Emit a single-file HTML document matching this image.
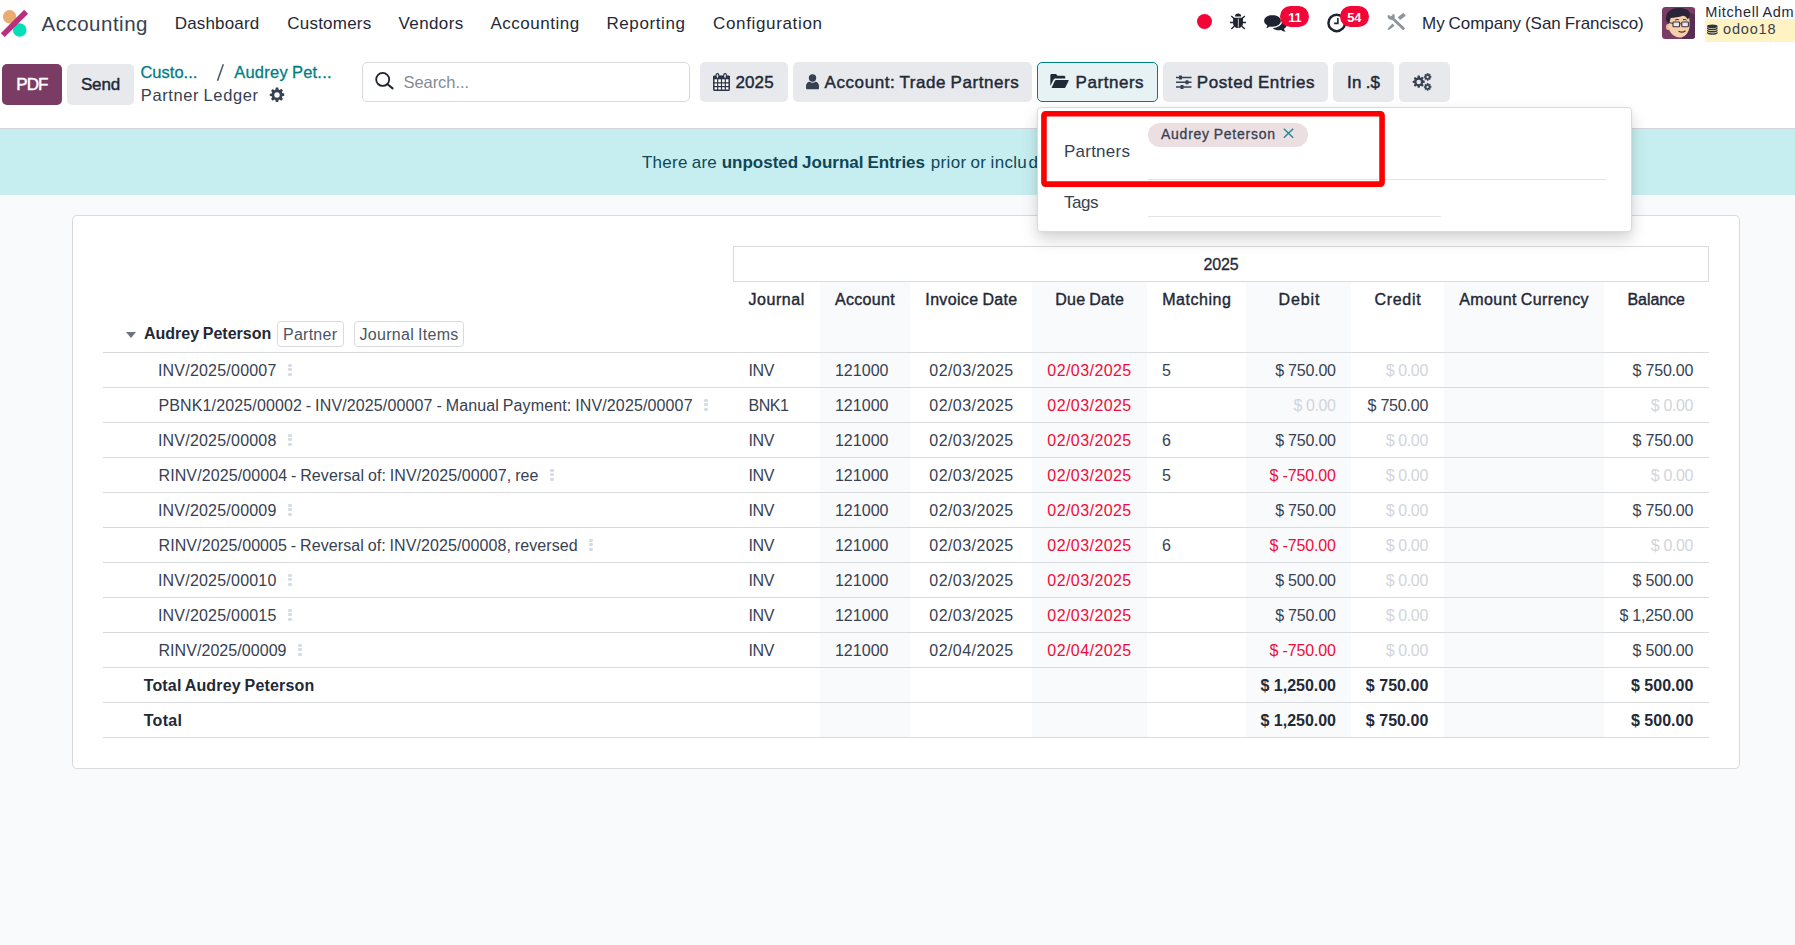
<!DOCTYPE html>
<html><head><meta charset="utf-8"><title>Partner Ledger</title>
<style>
html,body{margin:0;padding:0}
body{width:1795px;height:945px;overflow:hidden;position:relative;background:#f9fafb;font-family:"Liberation Sans",sans-serif}
.b{position:absolute;display:block}
.t{position:absolute;white-space:pre;line-height:1;display:block}
</style></head><body>
<div class="b" style="left:0px;top:0px;width:1795px;height:128px;background:#ffffff;"></div>
<div class="b" style="left:0px;top:128px;width:1795px;height:67px;background:#c6eef0;"></div>
<div class="b" style="left:0px;top:128px;width:1795px;height:1px;background:#d3d5da;"></div>
<div class="b" style="left:72px;top:215px;width:1668px;height:554px;background:#ffffff;border:1px solid #d8dadd;box-sizing:border-box;border-radius:5px;"></div>
<div class="b" style="left:820px;top:282px;width:90px;height:455px;background:#f9fafb;"></div>
<div class="b" style="left:1032px;top:282px;width:115px;height:455px;background:#f9fafb;"></div>
<div class="b" style="left:1246px;top:282px;width:105px;height:455px;background:#f9fafb;"></div>
<div class="b" style="left:1444px;top:282px;width:160px;height:455px;background:#f9fafb;"></div>
<div class="b" style="left:733px;top:246px;width:976px;height:36px;background:#ffffff;border:1px solid #d8dadd;box-sizing:border-box;"></div>
<div class="b" style="left:103px;top:352px;width:1606px;height:1px;background:#d8dadd;"></div>
<div class="b" style="left:103px;top:387px;width:1606px;height:1px;background:#d8dadd;"></div>
<div class="b" style="left:103px;top:422px;width:1606px;height:1px;background:#d8dadd;"></div>
<div class="b" style="left:103px;top:457px;width:1606px;height:1px;background:#d8dadd;"></div>
<div class="b" style="left:103px;top:492px;width:1606px;height:1px;background:#d8dadd;"></div>
<div class="b" style="left:103px;top:527px;width:1606px;height:1px;background:#d8dadd;"></div>
<div class="b" style="left:103px;top:562px;width:1606px;height:1px;background:#d8dadd;"></div>
<div class="b" style="left:103px;top:597px;width:1606px;height:1px;background:#d8dadd;"></div>
<div class="b" style="left:103px;top:632px;width:1606px;height:1px;background:#d8dadd;"></div>
<div class="b" style="left:103px;top:667px;width:1606px;height:1px;background:#d8dadd;"></div>
<div class="b" style="left:103px;top:702px;width:1606px;height:1px;background:#d8dadd;"></div>
<div class="b" style="left:103px;top:737px;width:1606px;height:1px;background:#d8dadd;"></div>
<svg class="b" style="left:0px;top:4px;" width="40" height="40" viewBox="0 4 40 40"><circle cx="9.6" cy="16.7" r="6.7" fill="#e9ac72"/><circle cx="19.7" cy="30" r="6.8" fill="#04dfba"/><line x1="2.8" y1="35.1" x2="26.1" y2="11.8" stroke="#b9307e" stroke-width="5.5" stroke-linecap="butt"/></svg>
<span class="t" style="left:41.50px;top:14.00px;font-size:20.5px;color:#374151;letter-spacing:0.507px;">Accounting</span>
<span class="t" style="left:174.70px;top:15.00px;font-size:17px;color:#1f2937;letter-spacing:0.166px;">Dashboard</span>
<span class="t" style="left:287.30px;top:15.00px;font-size:17px;color:#1f2937;letter-spacing:0.214px;">Customers</span>
<span class="t" style="left:398.50px;top:15.00px;font-size:17px;color:#1f2937;letter-spacing:0.385px;">Vendors</span>
<span class="t" style="left:490.40px;top:15.00px;font-size:17px;color:#1f2937;letter-spacing:0.531px;">Accounting</span>
<span class="t" style="left:606.40px;top:15.00px;font-size:17px;color:#1f2937;letter-spacing:0.610px;">Reporting</span>
<span class="t" style="left:713.00px;top:15.00px;font-size:17px;color:#1f2937;letter-spacing:0.656px;">Configuration</span>
<div class="b" style="left:1197.4px;top:13.9px;width:15.0px;height:14.999999999999998px;background:#f20537;border-radius:8px;"></div>
<svg class="b" style="left:1226px;top:10px;" width="24" height="24" viewBox="1226 10 24 24"><g fill="#1f2433"><path d="M1235 16.400a3.100 2.900 0 0 1 6.200 0z"/><path d="M1233.100 17.800h9.900v5.400c0 2.700-2.200 4.750-4.950 4.750s-4.950-2.050-4.950-4.750z"/></g><g stroke="#1f2433" stroke-width="1.350" fill="none"><path d="M1231.300 16 1234 18.500M1230 22.500h3.500M1231.300 29 1234.200 26.200M1244.800 16 1242.100 18.500M1246 22.500h-3.500M1244.800 29 1241.900 26.200"/></g><path d="M1238.350 18.600v9" stroke="#e8d7c0" stroke-width="0.9"/></svg>
<svg class="b" style="left:1260px;top:10px;" width="30" height="26" viewBox="1260 10 30 26"><g fill="#1f2433"><path d="M1278.800 18.700c-4.400 0-8 2.550-8 5.750 0 3.150 3.600 5.750 8 5.750.8 0 1.600-.1 2.400-.25 1.100 1 2.700 1.650 4.400 1.650-.8-.8-1.400-1.700-1.650-2.800 1.750-1.050 2.850-2.600 2.850-4.350 0-3.200-3.600-5.750-8-5.750z"/><path stroke="#fff" stroke-width="1.300" d="M1272.500 14.400c-5 0-9.100 2.900-9.100 6.500 0 2 1.200 3.800 3.200 5-.3 1.200-1 2.300-1.900 3.200 2 0 3.800-.8 5.100-1.900.9.200 1.800.300 2.700.300 5 0 9.100-2.900 9.100-6.600s-4.100-6.500-9.100-6.500z"/></g></svg>
<div class="b" style="left:1280px;top:5.5px;width:28.59999999999991px;height:21.1px;background:#f20537;border-radius:10.5px;"></div>
<span class="t" style="left:1288.13px;top:12.00px;font-size:12.8px;color:#ffffff;font-weight:700;">11</span>
<svg class="b" style="left:1324px;top:10px;" width="26" height="26" viewBox="1324 10 26 26"><circle cx="1336.700" cy="22.900" r="8.250" fill="none" stroke="#1f2433" stroke-width="2.500"/><path d="M1337.900 18v5.400H1334.100" fill="none" stroke="#1f2433" stroke-width="1.600"/></svg>
<div class="b" style="left:1340.2px;top:5.5px;width:28.59999999999991px;height:21.1px;background:#f20537;border-radius:10.5px;"></div>
<span class="t" style="left:1347.18px;top:12.00px;font-size:12.8px;color:#ffffff;font-weight:700;">54</span>
<svg class="b" style="left:1384px;top:10px;" width="24" height="24" viewBox="1384 10 24 24"><g stroke="#8d949c" fill="none"><path d="M1391.500 17.300 1403.300 28.500" stroke-width="2.900" stroke-linecap="round"/><path d="M1404.600 14.200 1398.900 18.600" stroke-width="3.700"/></g><path d="M1387.600 15.600 1389.400 14.900 1390.300 16.900 1392 16.600 1392.300 14.400 1394 13.900C1395.200 15.400 1395 17.600 1393.600 18.900 1392.200 20.200 1389.900 20.200 1388.600 18.800 1387.800 17.900 1387.500 16.700 1387.600 15.600z" fill="#8d949c"/><path d="M1392.500 23.600 1394.600 25.700 1389.600 29.400 1387.500 30.100 1388.200 28z" fill="#8d949c"/></svg>
<span class="t" style="left:1422.00px;top:15.00px;font-size:17px;color:#1f2937;letter-spacing:-0.024px;word-spacing:-0.82px;">My Company (San Francisco)</span>
<svg class="b" style="left:1662px;top:7px;" width="33.3" height="32" viewBox="0 0 33.300 32"><defs><clipPath id="av"><rect width="33.300" height="32" rx="3.500"/></clipPath></defs><g clip-path="url(#av)"><rect width="33.300" height="32" fill="#7a3b66"/><path d="M24 4 33.300 8v24H20z" fill="#4d2a4c" opacity=".75"/><ellipse cx="6" cy="20" rx="2" ry="3" fill="#e9bd97"/><path d="M6.500 12C6.500 9 11 7 17 7s10.500 2 10.500 6v6c0 6-4.500 11.500-9.500 11.500S6.500 26 6.500 19z" fill="#f4cfa8"/><path d="M4.300 14C2.500 6.500 8 1 16.500 1c7.500 0 11.800 2 11.300 7.500L26 12.500c-1.500-2.500-3-3.500-5-3.800-4 1.500-9 1.800-12.300 2.300L7 17z" fill="#2a2438"/><g fill="#eee6e6" stroke="#3a3344" stroke-width="1.100"><rect x="11" y="15" width="6.600" height="4.800" rx=".8"/><rect x="19.800" y="15" width="6.600" height="4.800" rx=".8"/></g><path d="M17.600 16.800h2.200M11 16.500 7 15.500" stroke="#3a3344" stroke-width="1" fill="none"/><path d="M16.500 24.300c2.500 1.200 5 1 7-.6" stroke="#5a3030" stroke-width="1.200" fill="none"/><path d="M13 13.200c1.200-.8 2.600-.9 3.800-.5M21 12.700c1.300-.4 2.600-.2 3.600.5" stroke="#2a2438" stroke-width="1" fill="none"/></g></svg>
<span class="t" style="left:1705.30px;top:5.00px;font-size:14.5px;color:#1f2937;letter-spacing:0.609px;word-spacing:-0.70px;">Mitchell Adm</span>
<div class="b" style="left:1705px;top:19px;width:90px;height:22.5px;background:#fff3c4;"></div>
<svg class="b" style="left:1707.3px;top:24.2px;" width="10.6" height="11.4" viewBox="0 0 11 10.900"><g fill="#2c3444"><ellipse cx="5.500" cy="2" rx="5.500" ry="2"/><path d="M0 2.9c1.100 1.100 3.300 1.600 5.500 1.600s4.400-.5 5.500-1.600v1.5c-1.100 1.100-3.300 1.600-5.500 1.600S1.100 5.50 0 4.4z"/><path d="M0 5.3c1.100 1.100 3.300 1.600 5.500 1.600s4.400-.5 5.500-1.600v1.5c-1.100 1.100-3.300 1.600-5.500 1.600S1.100 7.90 0 6.8z"/><path d="M0 7.7c1.100 1.100 3.300 1.600 5.500 1.600s4.400-.5 5.500-1.600v1.5c-1.100 1.100-3.300 1.600-5.500 1.600S1.100 10.30 0 9.2z"/></g></svg>
<span class="t" style="left:1723.00px;top:22.00px;font-size:14.5px;color:#374151;letter-spacing:0.822px;">odoo18</span>
<div class="b" style="left:2px;top:64px;width:60px;height:41px;background:#7a3c64;border-radius:5px;"></div>
<span class="t" style="left:16.30px;top:76.00px;font-size:17px;color:#ffffff;letter-spacing:-0.950px;-webkit-text-stroke:0.45px #ffffff;">PDF</span>
<div class="b" style="left:67px;top:64px;width:67px;height:41px;background:#e7e9ed;border-radius:5px;"></div>
<span class="t" style="left:80.90px;top:76.00px;font-size:17px;color:#1f2937;letter-spacing:-0.134px;-webkit-text-stroke:0.45px #1f2937;">Send</span>
<span class="t" style="left:140.40px;top:64.00px;font-size:16.5px;color:#017e84;letter-spacing:0.020px;-webkit-text-stroke:0.3px #017e84;">Custo...</span>
<svg class="b" style="left:214px;top:62px;" width="14" height="22" viewBox="214 62 14 22"><path d="M217.500 80.700 223.300 64.300" stroke="#4b5563" stroke-width="1.500" fill="none"/></svg>
<span class="t" style="left:234.20px;top:64.00px;font-size:16.5px;color:#017e84;letter-spacing:0.234px;word-spacing:-0.79px;-webkit-text-stroke:0.3px #017e84;">Audrey Pet...</span>
<span class="t" style="left:140.80px;top:87.00px;font-size:16.5px;color:#374151;letter-spacing:0.609px;word-spacing:-0.79px;">Partner Ledger</span>
<svg class="b" style="left:268.5px;top:87px;" width="16" height="16" viewBox="0 0 16 16"><path fill="#374151" fill-rule="evenodd" d="M6.800.5h2.400l.4 2 .95.4 1.700-1.150 1.700 1.700-1.150 1.700.4.950 2 .4v2.400l-2 .4-.4.950 1.150 1.700-1.700 1.700-1.700-1.150-.95.4-.4 2H6.800l-.4-2-.95-.4-1.700 1.150-1.700-1.700 1.150-1.700-.4-.95-2-.4V6.800l2-.4.4-.95L2.050 3.750l1.700-1.700 1.700 1.150.95-.4zM8 5.300a2.700 2.700 0 1 0 0 5.400 2.700 2.700 0 0 0 0-5.400z"/></svg>
<div class="b" style="left:362px;top:62px;width:328px;height:40px;background:#ffffff;border:1px solid #d8dadd;box-sizing:border-box;border-radius:5px;"></div>
<svg class="b" style="left:372px;top:68px;" width="26" height="26" viewBox="372 68 26 26"><circle cx="382.700" cy="79.400" r="6.500" fill="none" stroke="#1f2433" stroke-width="1.800"/><path d="M387.500 84.300 392.600 88.400" stroke="#1f2433" stroke-width="2" stroke-linecap="round"/></svg>
<span class="t" style="left:403.60px;top:74.00px;font-size:16.5px;color:#858b97;letter-spacing:-0.081px;">Search...</span>
<div class="b" style="left:700px;top:62px;width:88px;height:40px;background:#e7e9ed;border-radius:5px;"></div>
<svg class="b" style="left:713px;top:72.6px;" width="17" height="18" viewBox="0 0 17 18"><rect x=".8" y="3.200" width="15.400" height="14" rx=".8" fill="#ffffff" stroke="#2c3444" stroke-width="1.500"/><g fill="none" stroke="#2c3444"><path d="M.8 9.800h15.400M.8 13.600h15.400M4.700 6v11M8.500 6v11M12.300 6v11" stroke-width="1.200"/></g><rect x=".1" y="2.900" width="16.800" height="3.400" fill="#2c3444"/><g fill="#dfe6ee" stroke="#2c3444" stroke-width="1.100"><rect x="3.100" y=".6" width="2.700" height="4.600" rx="1.300"/><rect x="10.700" y=".6" width="2.700" height="4.600" rx="1.300"/></g></svg>
<span class="t" style="left:735.60px;top:74.00px;font-size:17px;color:#1f2937;letter-spacing:0.057px;-webkit-text-stroke:0.45px #1f2937;">2025</span>
<div class="b" style="left:793px;top:62px;width:239px;height:40px;background:#e7e9ed;border-radius:5px;"></div>
<svg class="b" style="left:806px;top:74px;" width="13" height="16" viewBox="0 0 13 16"><g fill="#374151"><circle cx="6.500" cy="4" r="3.700"/><path d="M1.300 15.300C.5 15.300 0 14.700 0 14v-2c0-2.600 1.800-4.200 3.600-4.200.9.600 1.800 1 2.900 1s2-.4 2.900-1c1.800 0 3.600 1.600 3.600 4.200v2c0 .7-.5 1.300-1.300 1.300z"/></g></svg>
<span class="t" style="left:824.60px;top:74.00px;font-size:17px;color:#1f2937;letter-spacing:0.564px;word-spacing:-0.82px;-webkit-text-stroke:0.45px #1f2937;">Account: Trade Partners</span>
<div class="b" style="left:1037px;top:62px;width:121px;height:40px;background:#e6f2f3;border:1px solid #017e84;box-sizing:border-box;border-radius:5px;"></div>
<svg class="b" style="left:1050.2px;top:74px;" width="19" height="14.2" viewBox="0 0 20 15.500"><g fill="#1f2937"><path d="M0 13V1.500C0 .7.700 0 1.500 0h4.700l1.600 1.800h7c.8 0 1.500.7 1.500 1.500v1.700H5.800c-1 0-1.900.5-2.400 1.400z"/><path d="M1.200 15.500 4.800 7.600c.3-.6.900-1 1.600-1h13.100c.5 0 .7.400.5.800l-3.500 7.200c-.3.600-.9.900-1.500.9z"/></g></svg>
<span class="t" style="left:1075.60px;top:74.00px;font-size:17px;color:#1f2937;letter-spacing:0.536px;-webkit-text-stroke:0.45px #1f2937;">Partners</span>
<div class="b" style="left:1163px;top:62px;width:165px;height:40px;background:#e7e9ed;border-radius:5px;"></div>
<svg class="b" style="left:1176px;top:75px;" width="15.5" height="14.5" viewBox="0 0 15.500 14.500"><g stroke="#374151" stroke-width="1.400" fill="none"><path d="M0 2.500h15.500M0 7.250h15.500M0 12h15.500"/></g><g fill="#374151"><rect x="3" y=".5" width="3" height="4" rx=".6"/><rect x="9.500" y="5.250" width="3" height="4" rx=".6"/><rect x="4.500" y="10" width="3" height="4" rx=".6"/></g></svg>
<span class="t" style="left:1196.70px;top:74.00px;font-size:17px;color:#1f2937;letter-spacing:0.627px;word-spacing:-0.82px;-webkit-text-stroke:0.45px #1f2937;">Posted Entries</span>
<div class="b" style="left:1333px;top:62px;width:61px;height:40px;background:#e7e9ed;border-radius:5px;"></div>
<span class="t" style="left:1347.00px;top:74.00px;font-size:17px;color:#1f2937;letter-spacing:0.184px;word-spacing:-0.82px;-webkit-text-stroke:0.45px #1f2937;">In .$</span>
<div class="b" style="left:1399px;top:62px;width:51px;height:40px;background:#e7e9ed;border-radius:5px;"></div>
<svg class="b" style="left:1412px;top:72.5px;" width="21" height="18.5" viewBox="0 0 21 18.500"><g fill="#374151" fill-rule="evenodd"><path transform="translate(0,2.200) scale(0.84)" d="M6.800.5h2.400l.4 2 .95.4 1.700-1.150 1.700 1.700-1.150 1.700.4.950 2 .4v2.400l-2 .4-.4.950 1.150 1.700-1.700 1.700-1.700-1.150-.95.4-.4 2H6.800l-.4-2-.95-.4-1.700 1.150-1.700-1.700 1.150-1.700-.4-.95-2-.4V6.800l2-.4.4-.95L2.050 3.750l1.700-1.700 1.700 1.150.95-.4zM8 5.300a2.700 2.700 0 1 0 0 5.400 2.700 2.700 0 0 0 0-5.400z"/><path transform="translate(11.600,0) scale(0.5)" d="M6.800.5h2.400l.4 2 .95.4 1.700-1.150 1.700 1.700-1.150 1.700.4.950 2 .4v2.400l-2 .4-.4.950 1.150 1.700-1.700 1.700-1.700-1.150-.95.4-.4 2H6.800l-.4-2-.95-.4-1.700 1.150-1.700-1.700 1.150-1.700-.4-.95-2-.4V6.800l2-.4.4-.95L2.050 3.750l1.700-1.700 1.700 1.150.95-.4zM8 5.300a2.700 2.700 0 1 0 0 5.400 2.700 2.700 0 0 0 0-5.400z" stroke="#374151" stroke-width=".8"/><path transform="translate(11.600,10) scale(0.5)" d="M6.800.5h2.400l.4 2 .95.4 1.700-1.150 1.700 1.700-1.150 1.700.4.950 2 .4v2.400l-2 .4-.4.950 1.150 1.700-1.700 1.700-1.700-1.150-.95.4-.4 2H6.800l-.4-2-.95-.4-1.700 1.150-1.700-1.700 1.150-1.700-.4-.95-2-.4V6.800l2-.4.4-.95L2.050 3.750l1.700-1.700 1.700 1.150.95-.4zM8 5.300a2.700 2.700 0 1 0 0 5.400 2.700 2.700 0 0 0 0-5.400z" stroke="#374151" stroke-width=".8"/></g></svg>
<span class="t" style="left:642.00px;top:154.00px;font-size:17px;color:#0f4756;letter-spacing:0.239px;word-spacing:-0.82px;">There are</span>
<span class="t" style="left:721.70px;top:154.00px;font-size:17px;color:#0f4756;font-weight:700;word-spacing:-0.82px;">unposted Journal Entries</span>
<span class="t" style="left:930.80px;top:154.00px;font-size:17px;color:#0f4756;letter-spacing:0.315px;word-spacing:-0.82px;">prior or inclu</span>
<span class="t" style="left:1028.60px;top:154.00px;font-size:17px;color:#0f4756;letter-spacing:-0.208px;word-spacing:-0.82px;">ded in this period.</span>
<div class="b" style="left:1037px;top:107px;width:595px;height:125px;background:#ffffff;border:1px solid #d9dbe0;box-sizing:border-box;border-radius:4px;box-shadow:0 8px 16px rgba(0,0,0,.16),0 1px 4px rgba(0,0,0,.04);"></div>
<span class="t" style="left:1063.90px;top:143.00px;font-size:17px;color:#374151;letter-spacing:0.264px;">Partners</span>
<div class="b" style="left:1148px;top:123px;width:160px;height:24px;background:#ebdfe1;border-radius:12px;"></div>
<span class="t" style="left:1161.00px;top:127.00px;font-size:14px;color:#374151;letter-spacing:0.741px;word-spacing:-0.67px;-webkit-text-stroke:0.3px #374151;">Audrey Peterson</span>
<svg class="b" style="left:1282.6px;top:128.4px;" width="11" height="10.6" viewBox="0 0 11 10.600"><path d="M.8.800 10.200 9.800M10.200.800.8 9.800" stroke="#2a8a98" stroke-width="1.500" fill="none"/></svg>
<div class="b" style="left:1148px;top:179px;width:458px;height:1px;background:#e2e4e9;"></div>
<span class="t" style="left:1063.90px;top:194.00px;font-size:17px;color:#374151;letter-spacing:-0.407px;">Tags</span>
<div class="b" style="left:1148px;top:216px;width:293px;height:1px;background:#e2e4e9;"></div>
<svg class="b" style="left:1036px;top:106px;" width="354" height="86" viewBox="1036 106 354 86"><rect x="1043.950" y="113.800" width="338.100" height="70.300" rx="1.5" fill="none" stroke="#ff0000" stroke-width="5.600" stroke-linejoin="round"/></svg>
<span class="t" style="left:1203.40px;top:257.00px;font-size:16px;color:#1f2937;letter-spacing:-0.131px;-webkit-text-stroke:0.3px #1f2937;">2025</span>
<span class="t" style="left:748.50px;top:292.00px;font-size:16px;color:#1f2937;letter-spacing:0.553px;-webkit-text-stroke:0.4px #1f2937;">Journal</span>
<span class="t" style="left:834.90px;top:292.00px;font-size:16px;color:#1f2937;letter-spacing:0.331px;-webkit-text-stroke:0.4px #1f2937;">Account</span>
<span class="t" style="left:925.35px;top:292.00px;font-size:16px;color:#1f2937;letter-spacing:0.339px;word-spacing:-0.77px;-webkit-text-stroke:0.4px #1f2937;">Invoice Date</span>
<span class="t" style="left:1055.15px;top:292.00px;font-size:16px;color:#1f2937;letter-spacing:0.267px;word-spacing:-0.77px;-webkit-text-stroke:0.4px #1f2937;">Due Date</span>
<span class="t" style="left:1162.15px;top:292.00px;font-size:16px;color:#1f2937;letter-spacing:0.540px;-webkit-text-stroke:0.4px #1f2937;">Matching</span>
<span class="t" style="left:1278.45px;top:292.00px;font-size:16px;color:#1f2937;letter-spacing:0.935px;-webkit-text-stroke:0.4px #1f2937;">Debit</span>
<span class="t" style="left:1374.60px;top:292.00px;font-size:16px;color:#1f2937;letter-spacing:0.662px;-webkit-text-stroke:0.4px #1f2937;">Credit</span>
<span class="t" style="left:1459.25px;top:292.00px;font-size:16px;color:#1f2937;letter-spacing:0.398px;word-spacing:-0.77px;-webkit-text-stroke:0.4px #1f2937;">Amount Currency</span>
<span class="t" style="left:1627.40px;top:292.00px;font-size:16px;color:#1f2937;letter-spacing:-0.038px;-webkit-text-stroke:0.4px #1f2937;">Balance</span>
<svg class="b" style="left:126px;top:331.5px;" width="10" height="6" viewBox="0 0 10 6"><path d="M0 0h10L5 6z" fill="#6b7280"/></svg>
<span class="t" style="left:144.00px;top:326.00px;font-size:16px;color:#1f2937;font-weight:700;word-spacing:-0.77px;">Audrey Peterson</span>
<div class="b" style="left:277px;top:321px;width:67px;height:26px;background:#ffffff;border:1px solid #d8dadd;box-sizing:border-box;border-radius:4px;"></div>
<span class="t" style="left:283.00px;top:327.00px;font-size:16px;color:#4b5563;letter-spacing:0.255px;">Partner</span>
<div class="b" style="left:354px;top:321px;width:110px;height:26px;background:#ffffff;border:1px solid #d8dadd;box-sizing:border-box;border-radius:4px;"></div>
<span class="t" style="left:359.50px;top:327.00px;font-size:16px;color:#4b5563;letter-spacing:0.293px;word-spacing:-0.77px;">Journal Items</span>
<span class="t" style="left:157.90px;top:363.00px;font-size:16px;color:#374151;letter-spacing:0.219px;">INV/2025/00007</span>
<div class="b" style="left:288px;top:363.5px;width:3.8000000000000114px;height:3.1000000000000227px;background:#d7dce4;border-radius:1.2px;"></div>
<div class="b" style="left:288px;top:368.2px;width:3.8000000000000114px;height:3.1000000000000227px;background:#d7dce4;border-radius:1.2px;"></div>
<div class="b" style="left:288px;top:372.9px;width:3.8000000000000114px;height:3.1000000000000227px;background:#d7dce4;border-radius:1.2px;"></div>
<span class="t" style="left:748.50px;top:363.00px;font-size:16px;color:#374151;letter-spacing:-0.336px;">INV</span>
<span class="t" style="left:834.90px;top:363.00px;font-size:16px;color:#374151;letter-spacing:0.042px;">121000</span>
<span class="t" style="left:929.35px;top:363.00px;font-size:16px;color:#374151;letter-spacing:0.425px;">02/03/2025</span>
<span class="t" style="left:1047.35px;top:363.00px;font-size:16px;color:#f00c3a;letter-spacing:0.425px;">02/03/2025</span>
<span class="t" style="left:1162.00px;top:363.00px;font-size:16px;color:#374151;">5</span>
<span class="t" style="left:1275.20px;top:363.00px;font-size:16px;color:#374151;letter-spacing:-0.212px;">$ 750.00</span>
<span class="t" style="left:1385.70px;top:363.00px;font-size:16px;color:#d1d5db;letter-spacing:-0.377px;">$ 0.00</span>
<span class="t" style="left:1632.60px;top:363.00px;font-size:16px;color:#374151;letter-spacing:-0.212px;">$ 750.00</span>
<span class="t" style="left:158.50px;top:398.00px;font-size:16px;color:#374151;letter-spacing:0.131px;word-spacing:-0.77px;">PBNK1/2025/00002 - INV/2025/00007 - Manual Payment: INV/2025/00007</span>
<div class="b" style="left:704px;top:398.5px;width:3.7999999999999545px;height:3.1000000000000227px;background:#d7dce4;border-radius:1.2px;"></div>
<div class="b" style="left:704px;top:403.2px;width:3.7999999999999545px;height:3.1000000000000227px;background:#d7dce4;border-radius:1.2px;"></div>
<div class="b" style="left:704px;top:407.9px;width:3.7999999999999545px;height:3.1000000000000227px;background:#d7dce4;border-radius:1.2px;"></div>
<span class="t" style="left:748.50px;top:398.00px;font-size:16px;color:#374151;letter-spacing:-0.432px;">BNK1</span>
<span class="t" style="left:834.90px;top:398.00px;font-size:16px;color:#374151;letter-spacing:0.042px;">121000</span>
<span class="t" style="left:929.35px;top:398.00px;font-size:16px;color:#374151;letter-spacing:0.425px;">02/03/2025</span>
<span class="t" style="left:1047.35px;top:398.00px;font-size:16px;color:#f00c3a;letter-spacing:0.425px;">02/03/2025</span>
<span class="t" style="left:1293.40px;top:398.00px;font-size:16px;color:#d1d5db;letter-spacing:-0.377px;">$ 0.00</span>
<span class="t" style="left:1367.50px;top:398.00px;font-size:16px;color:#374151;letter-spacing:-0.212px;">$ 750.00</span>
<span class="t" style="left:1650.80px;top:398.00px;font-size:16px;color:#d1d5db;letter-spacing:-0.377px;">$ 0.00</span>
<span class="t" style="left:157.90px;top:433.00px;font-size:16px;color:#374151;letter-spacing:0.219px;">INV/2025/00008</span>
<div class="b" style="left:288px;top:433.5px;width:3.8000000000000114px;height:3.1000000000000227px;background:#d7dce4;border-radius:1.2px;"></div>
<div class="b" style="left:288px;top:438.2px;width:3.8000000000000114px;height:3.1000000000000227px;background:#d7dce4;border-radius:1.2px;"></div>
<div class="b" style="left:288px;top:442.9px;width:3.8000000000000114px;height:3.1000000000000227px;background:#d7dce4;border-radius:1.2px;"></div>
<span class="t" style="left:748.50px;top:433.00px;font-size:16px;color:#374151;letter-spacing:-0.336px;">INV</span>
<span class="t" style="left:834.90px;top:433.00px;font-size:16px;color:#374151;letter-spacing:0.042px;">121000</span>
<span class="t" style="left:929.35px;top:433.00px;font-size:16px;color:#374151;letter-spacing:0.425px;">02/03/2025</span>
<span class="t" style="left:1047.35px;top:433.00px;font-size:16px;color:#f00c3a;letter-spacing:0.425px;">02/03/2025</span>
<span class="t" style="left:1162.00px;top:433.00px;font-size:16px;color:#374151;">6</span>
<span class="t" style="left:1275.20px;top:433.00px;font-size:16px;color:#374151;letter-spacing:-0.212px;">$ 750.00</span>
<span class="t" style="left:1385.70px;top:433.00px;font-size:16px;color:#d1d5db;letter-spacing:-0.377px;">$ 0.00</span>
<span class="t" style="left:1632.60px;top:433.00px;font-size:16px;color:#374151;letter-spacing:-0.212px;">$ 750.00</span>
<span class="t" style="left:158.50px;top:468.00px;font-size:16px;color:#374151;letter-spacing:0.101px;word-spacing:-0.77px;">RINV/2025/00004 - Reversal of: INV/2025/00007, ree</span>
<div class="b" style="left:550px;top:468.5px;width:3.7999999999999545px;height:3.1000000000000227px;background:#d7dce4;border-radius:1.2px;"></div>
<div class="b" style="left:550px;top:473.2px;width:3.7999999999999545px;height:3.1000000000000227px;background:#d7dce4;border-radius:1.2px;"></div>
<div class="b" style="left:550px;top:477.9px;width:3.7999999999999545px;height:3.1000000000000227px;background:#d7dce4;border-radius:1.2px;"></div>
<span class="t" style="left:748.50px;top:468.00px;font-size:16px;color:#374151;letter-spacing:-0.336px;">INV</span>
<span class="t" style="left:834.90px;top:468.00px;font-size:16px;color:#374151;letter-spacing:0.042px;">121000</span>
<span class="t" style="left:929.35px;top:468.00px;font-size:16px;color:#374151;letter-spacing:0.425px;">02/03/2025</span>
<span class="t" style="left:1047.35px;top:468.00px;font-size:16px;color:#f00c3a;letter-spacing:0.425px;">02/03/2025</span>
<span class="t" style="left:1162.00px;top:468.00px;font-size:16px;color:#374151;">5</span>
<span class="t" style="left:1269.50px;top:468.00px;font-size:16px;color:#f00c3a;letter-spacing:-0.139px;">$ -750.00</span>
<span class="t" style="left:1385.70px;top:468.00px;font-size:16px;color:#d1d5db;letter-spacing:-0.377px;">$ 0.00</span>
<span class="t" style="left:1650.80px;top:468.00px;font-size:16px;color:#d1d5db;letter-spacing:-0.377px;">$ 0.00</span>
<span class="t" style="left:157.90px;top:503.00px;font-size:16px;color:#374151;letter-spacing:0.219px;">INV/2025/00009</span>
<div class="b" style="left:288px;top:503.5px;width:3.8000000000000114px;height:3.1000000000000227px;background:#d7dce4;border-radius:1.2px;"></div>
<div class="b" style="left:288px;top:508.2px;width:3.8000000000000114px;height:3.1000000000000227px;background:#d7dce4;border-radius:1.2px;"></div>
<div class="b" style="left:288px;top:512.9px;width:3.8000000000000114px;height:3.1000000000000227px;background:#d7dce4;border-radius:1.2px;"></div>
<span class="t" style="left:748.50px;top:503.00px;font-size:16px;color:#374151;letter-spacing:-0.336px;">INV</span>
<span class="t" style="left:834.90px;top:503.00px;font-size:16px;color:#374151;letter-spacing:0.042px;">121000</span>
<span class="t" style="left:929.35px;top:503.00px;font-size:16px;color:#374151;letter-spacing:0.425px;">02/03/2025</span>
<span class="t" style="left:1047.35px;top:503.00px;font-size:16px;color:#f00c3a;letter-spacing:0.425px;">02/03/2025</span>
<span class="t" style="left:1275.20px;top:503.00px;font-size:16px;color:#374151;letter-spacing:-0.212px;">$ 750.00</span>
<span class="t" style="left:1385.70px;top:503.00px;font-size:16px;color:#d1d5db;letter-spacing:-0.377px;">$ 0.00</span>
<span class="t" style="left:1632.60px;top:503.00px;font-size:16px;color:#374151;letter-spacing:-0.212px;">$ 750.00</span>
<span class="t" style="left:158.50px;top:538.00px;font-size:16px;color:#374151;letter-spacing:0.093px;word-spacing:-0.77px;">RINV/2025/00005 - Reversal of: INV/2025/00008, reversed</span>
<div class="b" style="left:589px;top:538.5px;width:3.7999999999999545px;height:3.1000000000000227px;background:#d7dce4;border-radius:1.2px;"></div>
<div class="b" style="left:589px;top:543.2px;width:3.7999999999999545px;height:3.099999999999909px;background:#d7dce4;border-radius:1.2px;"></div>
<div class="b" style="left:589px;top:547.9px;width:3.7999999999999545px;height:3.1000000000000227px;background:#d7dce4;border-radius:1.2px;"></div>
<span class="t" style="left:748.50px;top:538.00px;font-size:16px;color:#374151;letter-spacing:-0.336px;">INV</span>
<span class="t" style="left:834.90px;top:538.00px;font-size:16px;color:#374151;letter-spacing:0.042px;">121000</span>
<span class="t" style="left:929.35px;top:538.00px;font-size:16px;color:#374151;letter-spacing:0.425px;">02/03/2025</span>
<span class="t" style="left:1047.35px;top:538.00px;font-size:16px;color:#f00c3a;letter-spacing:0.425px;">02/03/2025</span>
<span class="t" style="left:1162.00px;top:538.00px;font-size:16px;color:#374151;">6</span>
<span class="t" style="left:1269.50px;top:538.00px;font-size:16px;color:#f00c3a;letter-spacing:-0.139px;">$ -750.00</span>
<span class="t" style="left:1385.70px;top:538.00px;font-size:16px;color:#d1d5db;letter-spacing:-0.377px;">$ 0.00</span>
<span class="t" style="left:1650.80px;top:538.00px;font-size:16px;color:#d1d5db;letter-spacing:-0.377px;">$ 0.00</span>
<span class="t" style="left:157.90px;top:573.00px;font-size:16px;color:#374151;letter-spacing:0.219px;">INV/2025/00010</span>
<div class="b" style="left:288px;top:573.5px;width:3.8000000000000114px;height:3.1000000000000227px;background:#d7dce4;border-radius:1.2px;"></div>
<div class="b" style="left:288px;top:578.2px;width:3.8000000000000114px;height:3.099999999999909px;background:#d7dce4;border-radius:1.2px;"></div>
<div class="b" style="left:288px;top:582.9px;width:3.8000000000000114px;height:3.1000000000000227px;background:#d7dce4;border-radius:1.2px;"></div>
<span class="t" style="left:748.50px;top:573.00px;font-size:16px;color:#374151;letter-spacing:-0.336px;">INV</span>
<span class="t" style="left:834.90px;top:573.00px;font-size:16px;color:#374151;letter-spacing:0.042px;">121000</span>
<span class="t" style="left:929.35px;top:573.00px;font-size:16px;color:#374151;letter-spacing:0.425px;">02/03/2025</span>
<span class="t" style="left:1047.35px;top:573.00px;font-size:16px;color:#f00c3a;letter-spacing:0.425px;">02/03/2025</span>
<span class="t" style="left:1275.20px;top:573.00px;font-size:16px;color:#374151;letter-spacing:-0.212px;">$ 500.00</span>
<span class="t" style="left:1385.70px;top:573.00px;font-size:16px;color:#d1d5db;letter-spacing:-0.377px;">$ 0.00</span>
<span class="t" style="left:1632.60px;top:573.00px;font-size:16px;color:#374151;letter-spacing:-0.212px;">$ 500.00</span>
<span class="t" style="left:157.90px;top:608.00px;font-size:16px;color:#374151;letter-spacing:0.219px;">INV/2025/00015</span>
<div class="b" style="left:288px;top:608.5px;width:3.8000000000000114px;height:3.1000000000000227px;background:#d7dce4;border-radius:1.2px;"></div>
<div class="b" style="left:288px;top:613.2px;width:3.8000000000000114px;height:3.099999999999909px;background:#d7dce4;border-radius:1.2px;"></div>
<div class="b" style="left:288px;top:617.9px;width:3.8000000000000114px;height:3.1000000000000227px;background:#d7dce4;border-radius:1.2px;"></div>
<span class="t" style="left:748.50px;top:608.00px;font-size:16px;color:#374151;letter-spacing:-0.336px;">INV</span>
<span class="t" style="left:834.90px;top:608.00px;font-size:16px;color:#374151;letter-spacing:0.042px;">121000</span>
<span class="t" style="left:929.35px;top:608.00px;font-size:16px;color:#374151;letter-spacing:0.425px;">02/03/2025</span>
<span class="t" style="left:1047.35px;top:608.00px;font-size:16px;color:#f00c3a;letter-spacing:0.425px;">02/03/2025</span>
<span class="t" style="left:1275.20px;top:608.00px;font-size:16px;color:#374151;letter-spacing:-0.212px;">$ 750.00</span>
<span class="t" style="left:1385.70px;top:608.00px;font-size:16px;color:#d1d5db;letter-spacing:-0.377px;">$ 0.00</span>
<span class="t" style="left:1619.40px;top:608.00px;font-size:16px;color:#374151;letter-spacing:-0.181px;">$ 1,250.00</span>
<span class="t" style="left:158.50px;top:643.00px;font-size:16px;color:#374151;letter-spacing:0.057px;">RINV/2025/00009</span>
<div class="b" style="left:298px;top:643.5px;width:3.8000000000000114px;height:3.1000000000000227px;background:#d7dce4;border-radius:1.2px;"></div>
<div class="b" style="left:298px;top:648.2px;width:3.8000000000000114px;height:3.099999999999909px;background:#d7dce4;border-radius:1.2px;"></div>
<div class="b" style="left:298px;top:652.9px;width:3.8000000000000114px;height:3.1000000000000227px;background:#d7dce4;border-radius:1.2px;"></div>
<span class="t" style="left:748.50px;top:643.00px;font-size:16px;color:#374151;letter-spacing:-0.336px;">INV</span>
<span class="t" style="left:834.90px;top:643.00px;font-size:16px;color:#374151;letter-spacing:0.042px;">121000</span>
<span class="t" style="left:929.35px;top:643.00px;font-size:16px;color:#374151;letter-spacing:0.425px;">02/04/2025</span>
<span class="t" style="left:1047.35px;top:643.00px;font-size:16px;color:#f00c3a;letter-spacing:0.425px;">02/04/2025</span>
<span class="t" style="left:1269.50px;top:643.00px;font-size:16px;color:#f00c3a;letter-spacing:-0.139px;">$ -750.00</span>
<span class="t" style="left:1385.70px;top:643.00px;font-size:16px;color:#d1d5db;letter-spacing:-0.377px;">$ 0.00</span>
<span class="t" style="left:1632.60px;top:643.00px;font-size:16px;color:#374151;letter-spacing:-0.212px;">$ 500.00</span>
<span class="t" style="left:143.70px;top:678.00px;font-size:16px;color:#1f2937;font-weight:700;letter-spacing:0.155px;word-spacing:-0.77px;">Total Audrey Peterson</span>
<span class="t" style="left:143.70px;top:713.00px;font-size:16px;color:#1f2937;font-weight:700;letter-spacing:0.292px;">Total</span>
<span class="t" style="left:1260.50px;top:678.00px;font-size:16px;color:#1f2937;font-weight:700;letter-spacing:-0.014px;">$ 1,250.00</span>
<span class="t" style="left:1365.80px;top:678.00px;font-size:16px;color:#1f2937;font-weight:700;letter-spacing:0.031px;">$ 750.00</span>
<span class="t" style="left:1630.90px;top:678.00px;font-size:16px;color:#1f2937;font-weight:700;letter-spacing:0.031px;">$ 500.00</span>
<span class="t" style="left:1260.50px;top:713.00px;font-size:16px;color:#1f2937;font-weight:700;letter-spacing:-0.014px;">$ 1,250.00</span>
<span class="t" style="left:1365.80px;top:713.00px;font-size:16px;color:#1f2937;font-weight:700;letter-spacing:0.031px;">$ 750.00</span>
<span class="t" style="left:1630.90px;top:713.00px;font-size:16px;color:#1f2937;font-weight:700;letter-spacing:0.031px;">$ 500.00</span>

</body></html>
